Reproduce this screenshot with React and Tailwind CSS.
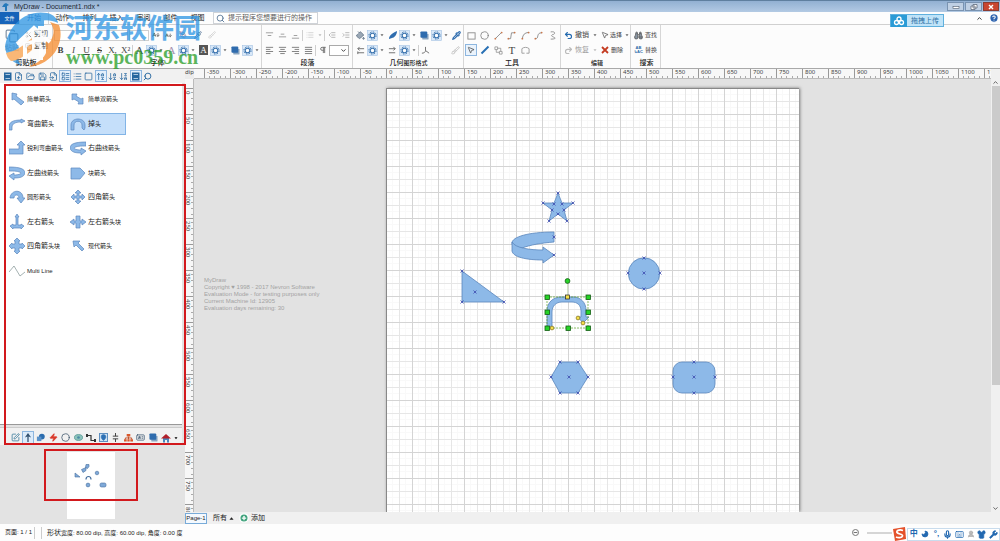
import { useState } from "react"
import {
    AArrowDown, AlignCenter, AlignJustify, AlignLeft, AlignRight, ArrowDownAZ, ArrowDownToLine, ArrowDownZA,
    ArrowUpAZ, ArrowUpToLine, Binoculars, Brush, ChevronDown, ChevronUp, Circle, CircleHelp, CirclePlus,
    Copy, FileInput, FilePlus, FoldVertical, FolderOpen, House, IdCard, IndentDecrease, IndentIncrease, Keyboard,
    List, MapPin, Mic, Minus, Moon, MousePointer2, Network, PaintBucket, PenTool, Pilcrow, Pipette, Redo2, Save,
    Scissors, Search, Shirt, Square, SquarePen, LayoutList, Undo2, UserRound, Wrench, Zap,
} from "lucide-react";

const SHAPE = "#8db9e8";
const EDGE = "#5b87bd";

const tabs = ["动作", "排列", "插入", "审阅", "部件", "视图"];

// [large part, small part] of each label
const library = [
    { icon: "arrow", big: "", small: "简单箭头" },
    { icon: "double", big: "", small: "简单双箭头" },
    { icon: "bend", big: "弯曲箭", small: "头" },
    { icon: "uturn", big: "掉", small: "头" },
    { icon: "sharp", big: "", small: "锐利弯曲箭头" },
    { icon: "right", big: "右曲", small: "线箭头" },
    { icon: "left", big: "左曲", small: "线箭头" },
    { icon: "block", big: "", small: "块箭头" },
    { icon: "round", big: "", small: "圆形箭头" },
    { icon: "quad", big: "四角箭", small: "头" },
    { icon: "tee", big: "左右箭", small: "头" },
    { icon: "cross", big: "左右箭", small: "头块" },
    { icon: "quadblock", big: "四角箭", small: "头块" },
    { icon: "modern", big: "", small: "现代箭头" },
    { icon: "line", big: "", small: "Multi Line" },
];

const paths = {
    arrow: "M3 2 L8 3 L7 5 L15 11 L12 14 L5 8 L3 9 Z",
    double: "M2 3 L7 3 L6 5 L11 8 L13 7 L13 13 L8 13 L9 11 L4 8 L2 9 Z",
    bend: "M0 14 V11 C0 6 4 4 12 4 V3 L16 5 L12 7 V6 C6 6 3 8 3 11 V14 Z",
    uturn: "M1 14 V9 C1 1 15 1 15 9 V12 L14 14 L12 12 V9 C12 4 4 4 4 9 V14 Z",
    sharp: "M0 14 V9 H10 V5 H8 L12 1 L16 5 H14 V14 Z",
    right: "M16 2 C5 2 0 4 0 8 C1 12 5 13 11 13 V15 L16 11 L11 8 V10 C7 10 4 9 4 8 C6 6 11 6 16 6 Z",
    left: "M0 2 C11 2 16 4 16 8 C15 12 11 13 5 13 V15 L0 11 L5 8 V10 C9 10 12 9 12 8 C10 6 5 6 0 6 Z",
    block: "M1 3 H10 L15 8 L10 14 H1 Z",
    round: "M1 9 C2 0 14 0 14 9 H16 L12 14 L8 9 H10 C10 5 5 5 5 9 Z",
    quad: "M8 1 L11 4 H9 V7 H12 V5 L15 8 L12 11 V9 H9 V12 H11 L8 15 L5 12 H7 V9 H4 V11 L1 8 L4 5 V7 H7 V4 H5 Z",
    tee: "M8 0 L10 3 H9 V11 H12 V10 L15 12 L12 15 V14 H4 V15 L1 12 L4 10 V11 H7 V3 H6 Z",
    cross: "M6 2 H10 V7 H12 V5 L16 8 L12 11 V9 H10 V14 H6 V9 H4 V11 L0 8 L4 5 V7 H6 Z",
    quadblock: "M8 0 L11 3 H10 V6 H13 V5 L16 8 L13 11 V10 H10 V13 H11 L8 16 L5 13 H6 V10 H3 V11 L0 8 L3 5 V6 H6 V3 H5 Z",
    modern: "M3 3 L10 3 L8 5 L14 11 L12 13 L6 7 L4 9 Z",
};

function ShapeIcon({ name }) {
    return (
        <svg viewBox="0 0 16 16" className="size-4 shrink-0">
            {name === "line" ? (
                <path d="M0 9 L5 3 L11 13 L16 9" fill="none" stroke="#7e9190" strokeWidth="0.7" />
            ) : (
                <path d={paths[name]} fill={SHAPE} stroke={EDGE} strokeWidth="0.7" />
            )}
        </svg>
    );
}

function Tool({ label, children, className = "w-[13px]" }) {
    return (
        <button type="button" aria-label={label} className={`flex h-[12px] shrink-0 items-center justify-center ${className}`}>
            {children}
        </button>
    );
}

function Gear() {
    return (
        <svg viewBox="0 0 11 11" className="h-[11px] w-[11px] shrink-0">
            <rect x="0.5" y="0.5" width="10" height="10" fill="#d9e8f8" stroke="#a3c2e3" strokeWidth="0.6" />
            <circle cx="5.5" cy="5.5" r="3.6" fill="none" stroke="#3a73ae" strokeWidth="1" strokeDasharray="1.6 1.2" />
            <circle cx="5.5" cy="5.5" r="2.3" fill="#fff" stroke="#3a73ae" strokeWidth="1.1" />
        </svg>
    );
}

function Caret({ className = "text-[#666]" }) {
    return (
        <svg viewBox="0 0 8 8" className={`h-2 w-2 shrink-0 ${className}`}>
            <path d="M2.5 3.3 H5.5 L4 5.2 Z" fill="currentColor" />
        </svg>
    );
}

// icon + settings box + drop-down arrow
function FormatTool({ label, children }) {
    return (
        <div className="flex h-[12px] w-8 shrink-0 items-center">
            <Tool label={label}>{children}</Tool>
            <button type="button" aria-label={`${label} 设置`} className="flex items-center">
                <Gear />
                <Caret />
            </button>
        </div>
    );
}

function Divider() {
    return <span className="h-[11px] w-px shrink-0 bg-[#cfcfcf]" />;
}

function Group({ title, width, children }) {
    return (
        <section className={`flex shrink-0 flex-col border-r border-[#d6d6d6] pt-1 ${width}`}>
            <div className="flex h-[30px] flex-col gap-[3px]">{children}</div>
            <h2 className="text-center text-[7px] leading-[10px] font-medium text-[#222]">{title}</h2>
        </section>
    );
}

function TitleBar() {
    return (
        <header className="flex h-[12px] shrink-0 items-center border-t border-[#5f7f9f] bg-linear-to-b from-[#92b0d2] to-[#b3cae4] pl-[2px]">
            <svg viewBox="0 0 8 8" className="h-[8px] w-[8px]">
                <path d="M4 0 L7 2 L5 3 V8 H3 V4 L0 4 L2 1 Z" fill="#2579ba" />
            </svg>
            <h1 className="ml-1 font-['Liberation_Sans',sans-serif] text-[7px] leading-[9px] text-[#1c2733]">MyDraw - Document1.ndx *</h1>
            <div className="ml-auto flex h-[9px] gap-px pr-px">
                <button type="button" aria-label="最小化" className="flex w-[17px] items-center justify-center border border-[#7993b1] bg-[#bfd0e4] text-[#4d5a6c]">
                    <svg viewBox="0 0 8 6" className="h-[6px] w-[8px]"><rect x="1" y="2.5" width="6" height="2" fill="#fff" stroke="currentColor" strokeWidth="0.6" /></svg>
                </button>
                <button type="button" aria-label="还原" className="flex w-[17px] items-center justify-center border border-[#7993b1] bg-[#bfd0e4] text-[#4d5a6c]">
                    <svg viewBox="0 0 8 6" className="h-[6px] w-[8px]"><path d="M3 0.5 H7 V4 H3 Z M1 2 H5 V5.5 H1 Z" fill="#fff" stroke="currentColor" strokeWidth="0.7" /></svg>
                </button>
                <button type="button" aria-label="关闭" className="flex w-[16px] items-center justify-center border border-[#8a3c33] bg-[#c9452f]">
                    <svg viewBox="0 0 8 6" className="h-[6px] w-[8px]"><path d="M2 1 L6 5 M6 1 L2 5" stroke="#fff" strokeWidth="1.4" /></svg>
                </button>
            </div>
        </header>
    );
}

function TabBar() {
    return (
        <nav className="flex h-[13px] shrink-0 items-stretch border-b border-[#d0d0d0] bg-[#fdfdfd] text-[7px] leading-[12px] text-[#222]">
            <button type="button" className="w-[19px] bg-[#1663b9] text-[5px] text-white">文件</button>
            <button type="button" className="w-[30px] border-x border-[#d6d6d6] text-[#1e64ab]">开始</button>
            {tabs.map((tab) => (
                <button key={tab} type="button" className="w-[27px] text-center">{tab}</button>
            ))}
            <label className="ml-[2px] flex w-[105px] items-center gap-[3px] border border-[#cfd3d8] bg-white pl-[2px] text-[#5c5c5c]">
                <Search className="size-[9px] shrink-0 text-[#3d6187]" strokeWidth={2} />
                <input
                    aria-label="搜索"
                    placeholder="提示程序您想要进行的操作"
                    className="min-w-0 flex-1 text-[7px] leading-[10px] outline-none placeholder:text-[#5c5c5c]"
                />
            </label>
            <div className="ml-auto flex items-center gap-[6px] pr-[1px]">
                <button type="button" aria-label="折叠功能区"><ChevronUp className="size-[7px]" strokeWidth={3} /></button>
                <button type="button" aria-label="帮助"><CircleHelp className="size-[10px] fill-[#2c62ae] text-white" strokeWidth={2.5} /></button>
            </div>
        </nav>
    );
}

function Ribbon() {
    const letters = [
        ["B", "font-bold"], ["I", "italic"], ["U", "underline"], ["S", "line-through"],
    ];
    return (
        <div className="flex h-[44px] shrink-0 overflow-hidden border-b border-[#a9a9a9] bg-[#fcfcfc] text-[7px] leading-[10px] text-[#444]">
            <Group title="剪贴板" width="w-[53px]">
                <div className="flex gap-[6px] pl-[5px] whitespace-nowrap">
                    <button type="button" className="flex flex-col items-center text-[#999]">
                        <Copy className="size-[14px] text-[#7a8da2]" />
                        <span>粘贴</span>
                    </button>
                    <div className="flex flex-col gap-[2px]">
                        <button type="button" className="flex items-center gap-[2px]"><Scissors className="size-[7px]" />剪切</button>
                        <button type="button" className="flex items-center gap-[2px]"><Copy className="size-[7px]" />复制</button>
                    </div>
                </div>
            </Group>
            <Group title="字体" width="w-[209px] pl-[1px]">
                <div className="flex h-[12px] items-center">
                    <select aria-label="字体" className="h-[11px] w-[74px] appearance-none border border-[#cfcfcf] bg-white" />
                    <select aria-label="字号" className="ml-px h-[11px] w-[20px] appearance-none border border-[#cfcfcf] bg-white" />
                    <Tool label="增大字号"><AArrowDown className="size-[8px]" /></Tool>
                    <Tool label="减小字号"><AArrowDown className="size-[7px]" /></Tool>
                    <Tool label="清除格式" className="w-[15px]"><PenTool className="size-[8px] text-[#8d7da2]" /></Tool>
                    <Tool label="取色" className="w-[15px]"><Pipette className="size-[8px] text-[#43658d]" /></Tool>
                    <Tool label="格式刷"><Brush className="size-[8px] text-[#ccc]" /></Tool>
                </div>
                <div className="flex h-[12px] items-center font-['Liberation_Serif',serif] text-[9px]">
                    {letters.map(([letter, style]) => (
                        <Tool key={letter} label={letter}><span className={style}>{letter}</span></Tool>
                    ))}
                    <Tool label="下标"><span>X,</span></Tool>
                    <Tool label="上标"><span>X²</span></Tool>
                    <Divider />
                    <FormatTool label="文字填充"><span className="text-[11px]">A</span></FormatTool>
                    <FormatTool label="文字描边"><span className="text-[11px] text-[#a48fae]">A</span></FormatTool>
                    <FormatTool label="文字背景"><span className="w-[9px] bg-[#555] text-center text-white">A</span></FormatTool>
                    <FormatTool label="阴影"><BlueBox /></FormatTool>
                </div>
            </Group>
            <Group title="段落" width="w-[91px] pl-[1px]">
                <div className="flex h-[12px] items-center text-[#999]">
                    <Tool label="顶端对齐"><Bars d="M1 2 H9 M3 5 H7" /></Tool>
                    <Tool label="居中对齐"><Bars d="M3 3.5 H7 M1 6.5 H9" /></Tool>
                    <Tool label="底端对齐"><Bars d="M3 5 H7 M1 8 H9" /></Tool>
                    <Divider />
                    <Tool label="项目符号"><List className="size-[8px] text-[#c4c4c4]" /></Tool>
                    <Caret className="text-[#bbb]" />
                    <Divider />
                    <Tool label="减少缩进" className="w-[14px]"><IndentDecrease className="size-[8px]" /></Tool>
                    <Tool label="增加缩进"><IndentIncrease className="size-[8px]" /></Tool>
                </div>
                <div className="flex h-[12px] items-center text-[#777]">
                    <Tool label="左对齐"><Bars d="M1 1.5 H9 M1 3.8 H6 M1 6.1 H9 M1 8.4 H6" /></Tool>
                    <Tool label="居中"><Bars d="M1 1.5 H9 M2.5 3.8 H7.5 M1 6.1 H9 M2.5 8.4 H7.5" /></Tool>
                    <Tool label="右对齐"><Bars d="M1 1.5 H9 M4 3.8 H9 M1 6.1 H9 M4 8.4 H9" /></Tool>
                    <Tool label="两端对齐"><Bars d="M1 1.5 H9 M1 3.8 H9 M1 6.1 H9 M1 8.4 H9" /></Tool>
                    <Divider />
                    <Tool label="段落方向"><Pilcrow className="size-[8px]" strokeWidth={3} /></Tool>
                    <div className="flex h-[11px] w-[20px] items-center border border-[#aaa] bg-white">
                        <select aria-label="段落" className="w-[10px] appearance-none" />
                        <ChevronDown className="size-[7px] text-[#333]" strokeWidth={3} />
                    </div>
                </div>
            </Group>
            <Group title={<>几何<span className="text-[6px]">图形格式</span></>} width="w-[111px] pl-[1px]">
                <div className="flex h-[12px] items-center">
                    <FormatTool label="填充"><PaintBucket className="size-[9px] fill-[#9aa7b5] text-[#5a6c80]" /></FormatTool>
                    <FormatTool label="描边">
                        <svg viewBox="0 0 10 10" className="size-[10px]"><path d="M1 9 C1 6 3 4 9 1 C9 5 6 8 4 8 Z" fill="#2e6cae" /></svg>
                    </FormatTool>
                    <FormatTool label="阴影"><BlueBox /></FormatTool>
                    <Tool label="取色器"><Pipette className="size-[9px] text-[#2e6cae]" strokeWidth={3} /></Tool>
                </div>
                <div className="flex h-[12px] items-center">
                    <FormatTool label="起始箭头"><Ends /></FormatTool>
                    <FormatTool label="结束箭头"><Ends flip /></FormatTool>
                    <Divider />
                    <Tool label="转角">
                        <svg viewBox="0 0 10 10" className="size-[9px]"><path d="M5 1 V5 C5 7 3 8 1 8 M5 5 L9 8" fill="none" stroke="#666" /></svg>
                    </Tool>
                    <Tool label="格式刷" className="ml-auto w-[16px]"><Brush className="size-[9px] text-[#bbb]" /></Tool>
                </div>
            </Group>
            <Group title="工具" width="w-[97px] px-[1px]">
                <div className="grid h-[12px] grid-cols-7 items-center">
                    <Tool label="矩形"><svg viewBox="0 0 10 10" className="size-[9px]"><rect x="1" y="2" width="8" height="7" fill="none" stroke="#8b8b8b" /></svg></Tool>
                    <Tool label="椭圆"><Circle className="size-[9px] text-[#777]" /></Tool>
                    <Curve label="直线" d="M1.5 8.5 L8.5 1.5" />
                    <Curve label="折线" d="M1.5 8.5 H4 L5 2 H8.5" />
                    <Curve label="弧线" d="M1.5 8.5 C2 4 4 2 8.5 1.5" />
                    <Curve label="曲线" d="M1.5 8.5 C6 9 2 2 8.5 2" />
                    <Tool label="自由绘制"><svg viewBox="0 0 10 10" className="size-[9px]"><path d="M3 1 C9 0 8 4 5 4 C2 6 6 6 8 8 C7 9 5 9 3 9" fill="none" stroke="#8b8b8b" /></svg></Tool>
                </div>
                <div className="grid h-[12px] grid-cols-7 items-center">
                    <button type="button" aria-label="指针" className="flex h-[12px] w-[12px] items-center justify-center border border-[#8db6df] bg-[#eaf3fc]"><MousePointer2 className="size-[8px] text-[#333]" /></button>
                    <Tool label="铅笔"><svg viewBox="0 0 10 10" className="size-[10px]"><path d="M1.5 8.5 L8.5 1.5" stroke="#2870b4" strokeWidth="2" /></svg></Tool>
                    <Tool label="连接线"><svg viewBox="0 0 10 10" className="size-[9px]"><path d="M1 1 H4 V4 H1 Z M6 6 H9 V9 H6 Z M4 2.5 H7.5 V6 M2.5 4 V7 H6" fill="none" stroke="#888" strokeWidth="0.8" /></svg></Tool>
                    <Tool label="文本"><span className="font-['Liberation_Serif',serif] text-[11px]">T</span></Tool>
                    <Tool label="闭合"><svg viewBox="0 0 10 10" className="size-[9px]"><path d="M4 8 H1 V3 C3 1 7 1 9 3 V8 H6" fill="none" stroke="#999" /></svg></Tool>
                </div>
            </Group>
            <Group title={<span className="text-[6px]">编辑</span>} width="w-[70px] pl-[3px]">
                <div className="flex h-[12px] items-center whitespace-nowrap">
                    <button type="button" className="flex w-[37px] shrink-0 items-center gap-[2px] text-[7px]"><Undo2 className="size-[9px] shrink-0 text-[#256bb0]" strokeWidth={3} />撤销<Caret /></button>
                    <button type="button" className="flex shrink-0 items-center gap-px text-[6px]"><MousePointer2 className="size-[8px] shrink-0" />选择<Caret /></button>
                </div>
                <div className="flex h-[12px] items-center whitespace-nowrap">
                    <button type="button" className="flex w-[37px] shrink-0 items-center gap-[2px] text-[#999]"><Redo2 className="size-[9px] shrink-0 text-[#bbb]" strokeWidth={3} />恢复<Caret className="text-[#bbb]" /></button>
                    <button type="button" className="flex shrink-0 items-center gap-[2px] text-[6px]">
                        <svg viewBox="0 0 8 8" className="size-[8px]"><path d="M1 1 L7 7 M7 1 L1 7" stroke="#c43c22" strokeWidth="1.8" /></svg>
                        删除
                    </button>
                </div>
            </Group>
            <Group title="搜索" width="w-[30px] pl-[3px] pr-px">
                <button type="button" className="flex h-[12px] items-center gap-[2px] text-[6px] whitespace-nowrap"><Binoculars className="size-[9px] fill-[#8895a3] text-[#555]" />查找</button>
                <button type="button" className="flex h-[12px] items-center gap-[2px] text-[6px] whitespace-nowrap">
                    <span className="w-[9px] text-[4px] leading-[4px] font-bold text-[#2a68a8]">AB<br />↳AC</span>替换
                </button>
            </Group>
        </div>
    );
}

function Bars({ d }) {
    return (
        <svg viewBox="0 0 10 10" className="size-[9px]">
            <path d={d} fill="none" stroke="currentColor" />
        </svg>
    );
}

function BlueBox() {
    return (
        <svg viewBox="0 0 10 10" className="size-[9px]">
            <rect x="2.5" y="3" width="7" height="6.5" rx="1" fill="#8aa5c0" />
            <rect x="0.5" y="0.5" width="7.5" height="7" rx="1" fill="#2f6cae" />
        </svg>
    );
}

function Ends({ flip }) {
    return (
        <svg viewBox="0 0 10 10" className="size-[9px]">
            <path d={flip ? "M1 3 H8 M6 1 L8 3 L6 5 M1 7.5 H8" : "M2 3 H9 M4 1 L2 3 L4 5 M2 7.5 H9 M2 6 V9"} fill="none" stroke="#666" />
        </svg>
    );
}

function Curve({ label, d }) {
    return (
        <Tool label={label}>
            <svg viewBox="0 0 10 10" className="size-[9px]">
                <path d={d} fill="none" stroke="#8a8a8a" />
                <circle cx="1.5" cy="8.5" r="1" fill="#c8774c" />
                <circle cx="8.5" cy="1.8" r="1" fill="#c8774c" />
            </svg>
        </Tool>
    );
}

function Book({ className }) {
    return (
        <svg viewBox="0 0 9 9" className={className}>
            <rect x="1" y="0.5" width="7.5" height="8" fill="currentColor" />
            <path d="M2.5 2.5 H7 M2.5 6.5 H7" stroke="#cfe0f0" strokeWidth="0.8" />
        </svg>
    );
}

function LibraryPanel() {
    const [selected, setSelected] = useState("uturn");
    const blue = "size-[9px] text-[#27679f]";
    const boxed = "flex h-[12px] w-[12px] items-center justify-center border border-[#8db6df] bg-[#e3effb]";
    const plain = "flex h-[12px] w-[12px] items-center justify-center";
    const actions = [
        ["库", Book, plain], ["新建", FilePlus, plain], ["打开", FolderOpen, plain], ["保存", Save, plain],
        ["导入", FileInput, plain], ["图标视图", LayoutList, boxed], ["列表视图", List, plain], ["大图标", Square, plain],
        ["不排序", ArrowUpAZ, boxed], ["升序", ArrowDownAZ, plain], ["降序", ArrowDownZA, plain],
        ["详情", Book, boxed],
    ];
    return (
        <aside className="flex w-[185px] shrink-0 flex-col bg-[#e3e3e3]">
            <div className="flex h-[14px] shrink-0 items-center bg-[#f1f1f1]">
                <div className="grid w-[153px] grid-cols-13 pl-px">
                    {actions.map(([label, Icon, style]) => (
                        <button key={label} type="button" aria-label={label} className={style}><Icon className={blue} strokeWidth={2} /></button>
                    ))}
                    <button type="button" aria-label="查找" className={plain}><Search className="size-[9px] -scale-x-100 text-[#27679f]" strokeWidth={2.5} /></button>
                </div>
            </div>
            <div className="mr-[3px] flex-1 border-b border-[#999] bg-white pt-1 pl-[6px]">
                <ul className="grid h-[196px] w-[122px] grid-cols-2 grid-rows-8">
                    {library.map((item) => (
                        <li key={item.icon} className="flex items-center">
                            <button
                                type="button"
                                onClick={() => setSelected(item.icon)}
                                className={`flex h-[22px] w-[59px] items-center gap-[2px] border pl-[2px] whitespace-nowrap text-[#222] ${selected === item.icon ? "border-[#82b4e6] bg-[#c5dffa]" : "border-transparent"}`}
                            >
                                <ShapeIcon name={item.icon} />
                                <span className="text-[6px] leading-[10px]">
                                    {item.big && <span className="text-[7px]">{item.big}</span>}
                                    {item.small}
                                </span>
                            </button>
                        </li>
                    ))}
                </ul>
            </div>
            <CategoryBar />
            <Thumbnail />
        </aside>
    );
}

function CategoryBar() {
    return (
        <div className="mt-[2px] mr-[3px] shrink-0 border-t border-[#ccc] bg-[#f1f1f1] pt-[3px] pb-px">
            <div className="ml-[9px] grid h-[13px] w-[175px] grid-cols-14 items-center">
                <Tool label="编辑"><SquarePen className="size-[9px] text-[#2f7396]" /></Tool>
                <button type="button" aria-label="箭头" className="flex h-[13px] items-center justify-center border border-[#8db6df] bg-[#dcebfa]">
                    <svg viewBox="0 0 8 10" className="h-[9px] w-[8px]"><path d="M4 0 L7.5 5 L4.700 4 V10 H3.300 V4 L0.500 5 Z" fill="#31506f" /></svg>
                </button>
                <Tool label="基本形状">
                    <svg viewBox="0 0 10 10" className="size-[9px]"><circle cx="6.5" cy="4" r="3.2" fill="#2b6cae" /><rect x="1" y="4" width="5" height="5" fill="#5a92c9" /></svg>
                </Tool>
                <Tool label="电气"><Zap className="size-[9px] fill-[#d93a2b] text-[#d93a2b]" /></Tool>
                <Tool label="圆"><Circle className="size-[9px] text-[#3b5368]" /></Tool>
                <Tool label="云">
                    <svg viewBox="0 0 10 10" className="size-[9px]"><ellipse cx="5" cy="5" rx="4.5" ry="3.2" fill="#8cc3bb" stroke="#5a9b98" /><circle cx="5" cy="5" r="1.5" fill="#4b8aa5" /></svg>
                </Tool>
                <Tool label="连接">
                    <svg viewBox="0 0 10 10" className="size-[10px]"><path d="M1 2.5 H5 V7.5 H9" fill="none" stroke="#333" strokeWidth="1.2" /><path d="M0 1 H2 V4 H0 Z M8 6 H10 V9 H8 Z" fill="#333" /></svg>
                </Tool>
                <Tool label="地图">
                    <span className="border border-[#5e8fc0] bg-[#cfe2f3]"><MapPin className="size-[7px] fill-[#2e71b5] text-[#2e71b5]" /></span>
                </Tool>
                <Tool label="间距">
                    <svg viewBox="0 0 10 10" className="size-[9px]"><path d="M5 0 V3.500 M5 6.500 V10 M2 3.500 H8 M2 6.500 H8" stroke="#333" /></svg>
                </Tool>
                <Tool label="组织结构">
                    <svg viewBox="0 0 10 10" className="size-[9px]"><path d="M3 1 H7 V4 H3 Z M0 7 H3 V9.500 H0 Z M3.700 7 H6.300 V9.500 H3.700 Z M7 7 H10 V9.500 H7 Z" fill="#d9582b" /><path d="M5 4 V7 M1.500 7 V5.500 H8.500 V7" fill="none" stroke="#c04b22" /></svg>
                </Tool>
                <Tool label="名片"><IdCard className="size-[9px] text-[#37536c]" /></Tool>
                <Tool label="标注"><BlueBox /></Tool>
                <Tool label="建筑">
                    <svg viewBox="0 0 10 10" className="size-[10px]"><path d="M2 5 H8 V9.500 H6 V7 H4 V9.500 H2 Z" fill="#4b86bb" /><path d="M0 5.500 L5 1 L10 5.500 Z" fill="#b1202b" /></svg>
                </Tool>
                <Tool label="更多" className="w-[8px]"><Caret className="text-black" /></Tool>
            </div>
        </div>
    );
}

function Thumbnail() {
    return (
        <div className="flex h-[79px] shrink-0 justify-center bg-[#e3e3e3] pt-[7px]">
            <svg viewBox="0 0 48 67" className="mr-[3px] h-[67px] w-[48px] bg-white">
                <g fill="#7fa9d8" stroke="#466f9f" strokeWidth="0.6">
                    <path d="M19 12.500 h3 v2 l-1.500 2 -2 -1 z" />
                    <path d="M14.500 17.500 l4.500 -2 v3 l-3 2 z" />
                    <path d="M8 21 L13 25 H8 Z" />
                    <circle cx="30" cy="21" r="1.8" />
                    <path d="M19 27.500 C19 23.500 24 23.500 24 27.500" fill="none" strokeWidth="1.2" />
                    <circle cx="21" cy="33" r="1.9" />
                    <rect x="33" y="31" width="6" height="4" rx="1.5" />
                </g>
            </svg>
        </div>
    );
}

const hLabels = Array.from({ length: 31 }, (_, i) => -350 + i * 50);
const vLabels = Array.from({ length: 17 }, (_, i) => i * 50);

function RulerTop() {
    return (
        <div className="flex h-[10px] shrink-0 bg-[#f7f7f7] font-['Noto_Sans',sans-serif] text-[6px] leading-[7px] text-[#444]">
            <span className="w-[9px] shrink-0 bg-[#ececec]">dip</span>
            <div className="flex min-w-0 flex-1 overflow-hidden border-b border-[#bbb] pl-[10px]">
                {hLabels.map((n) => (
                    <div key={n} className="flex w-[26px] shrink-0 flex-col justify-between border-l border-[#999] pl-[2px]">
                        {n}
                        <i className="flex h-[2px] justify-around pr-[2px]">
                            <b className="w-px bg-[#aaa]" /><b className="w-px bg-[#aaa]" /><b className="w-px bg-[#aaa]" /><b className="w-px bg-[#aaa]" />
                        </i>
                    </div>
                ))}
            </div>
            <span className="w-[9px] shrink-0 bg-[#f0f0f0]" />
        </div>
    );
}

function RulerSide() {
    return (
        <div className="w-[9px] shrink-0 overflow-hidden border-r border-[#bbb] bg-[#f7f7f7] pt-[9px] font-['Noto_Sans',sans-serif] text-[6px] leading-[6px] text-[#444]">
            {vLabels.map((n) => (
                <div key={n} className="flex h-[26px] justify-between border-t border-[#999]">
                    <span className="pt-[2px] [writing-mode:vertical-rl]">{n}</span>
                    <i className="flex w-[2px] flex-col justify-around">
                        <b className="h-px bg-[#aaa]" /><b className="h-px bg-[#aaa]" /><b className="h-px bg-[#aaa]" /><b className="h-px bg-[#aaa]" />
                    </i>
                </div>
            ))}
        </div>
    );
}

const anchors = [
    [558, 193], [543, 203], [573, 203], [554, 204], [562, 204], [552, 210], [564, 210], [558, 214], [549, 221], [567, 221],
    [554, 237], [554, 255], [462, 271], [462, 302], [504, 302], [475, 292],
    [644, 258], [628, 273], [660, 273], [644, 289], [644, 273],
    [560, 362], [578, 362], [551, 377], [588, 377], [560, 393], [578, 393], [569, 377],
    [694, 362], [673, 377], [715, 377], [694, 393], [694, 377],
];
const handles = [[547, 297], [588, 297], [547, 312], [588, 312], [547, 328], [568, 328], [588, 328]];

function Page() {
    return (
        <div className="mt-[9px] w-[413px] shrink-0 border-t border-l border-[#888] bg-white shadow-[1px_0_3px_#777]">
            <svg className="block h-full w-full">
                <defs>
                    <pattern id="grid" width="26" height="26" patternUnits="userSpaceOnUse">
                        <path d="M5.5 0 V26 M18.5 0 V26 M0 5.5 H26 M0 18.5 H26" stroke="#f9f9f9" />
                        <path d="M12.5 0 V26 M0 12.5 H26" stroke="#e6e6e6" />
                        <path d="M25.5 0 V26 M0 25.5 H26" stroke="#d4d4d4" />
                    </pattern>
                </defs>
                <rect width="100%" height="100%" fill="url(#grid)" />
                <g transform="translate(-387 -89)">
                    <g fill={SHAPE} stroke={EDGE} strokeWidth="0.8">
                        <path d="M558 193 L562 203 H573 L564 210 L567 221 L558 214 L549 221 L552 210 L543 203 H554 Z" />
                        <path d="M554 232 C528 232 512 237 512 243 C512 247 516 250 522 248 C530 245 541 243 554 242 Z" />
                        <path d="M512 242 V251 C513 257 526 260 543 260 V263 L554 255 L543 247 V250 C530 250 515 248 512 242 Z" />
                        <path d="M462 271 L504 302 H462 Z" />
                        <circle cx="644" cy="273.500" r="15.700" />
                        <path d="M547 328 V312 C547 302 553 297 562 297 H573 C581 297 586 303 586 310 V317 H589 L583 323 L578 317 H581 V311 C581 305 577 302 572 302 H562 C556 302 552 306 552 312 V328 Z" />
                        <path d="M560 362 H578 L588 377 L578 393 H560 L551 377 Z" />
                        <rect x="673" y="362" width="42" height="31" rx="9" />
                    </g>
                    <rect x="547" y="297" width="41" height="31" fill="none" stroke="#5ea62b" strokeWidth="0.7" strokeDasharray="2 1" />
                    <path d="M567.500 283 V297" stroke="#b5cf9d" strokeWidth="0.6" />
                    <g stroke="#3b49ad" strokeWidth="0.8">
                        {anchors.map(([x, y]) => (
                            <path key={`${x}-${y}`} d={`M${x - 1.5} ${y - 1.5} l3 3 m0 -3 l-3 3`} />
                        ))}
                    </g>
                    <g fill="#27d327" stroke="#145c14" strokeWidth="0.8">
                        {handles.map(([x, y]) => (
                            <rect key={`${x}-${y}`} x={x - 2} y={y - 2} width="4.500" height="4.500" />
                        ))}
                        <circle cx="567.500" cy="281" r="2.400" />
                    </g>
                    <g fill="#f6e04a" stroke="#7a6a1c" strokeWidth="0.7">
                        <rect x="565.500" y="295" width="4" height="4" stroke="#222" />
                        <circle cx="578" cy="318" r="1.900" />
                        <circle cx="583" cy="323" r="1.900" />
                        <circle cx="552" cy="328" r="1.900" />
                    </g>
                </g>
            </svg>
        </div>
    );
}

function Workspace() {
    return (
        <main className="flex min-w-0 flex-1 flex-col">
            <RulerTop />
            <div className="flex min-h-0 flex-1">
                <RulerSide />
                <div className="flex min-w-0 flex-1 overflow-hidden bg-[#e2e2e2]">
                    <div className="w-[192px] shrink-0 pt-[198px] pl-[10px] font-['Liberation_Sans',sans-serif] text-[6px] leading-[7px] whitespace-nowrap text-[#a3a3a3]">
                        <p>MyDraw</p>
                        <p>Copyright ♥ 1998 - 2017 Nevron Software</p>
                        <p>Evaluation Mode - for testing purposes only</p>
                        <p>Current Machine Id: 12905</p>
                        <p>Evaluation days remaining: 30</p>
                    </div>
                    <Page />
                </div>
                <div className="flex w-[9px] shrink-0 flex-col items-center justify-between bg-[#f0f0f0] text-[#555]">
                    <button type="button" aria-label="向上滚动"><ChevronUp className="size-[7px]" strokeWidth={3} /></button>
                    <div className="mb-auto h-[69%] w-[8px] bg-[#cbcbcb]" />
                    <button type="button" aria-label="向下滚动"><ChevronDown className="size-[7px]" strokeWidth={3} /></button>
                </div>
            </div>
            <div className="flex h-[12px] shrink-0 items-center bg-[#f0f0f0] text-[7px] leading-[10px] text-[#222]">
                <button type="button" className="h-[11px] w-[22px] border border-[#78abd9] bg-[#f4f9fe] font-['Liberation_Sans',sans-serif] text-[6px] leading-[9px]">Page-1</button>
                <button type="button" className="ml-[6px] flex items-center">
                    所有
                    <svg viewBox="0 0 6 6" className="ml-[2px] size-[5px]"><path d="M0.5 4.500 H5.500 L3 1.500 Z" fill="#222" /></svg>
                </button>
                <button type="button" className="ml-[5px] flex items-center gap-[2px]"><CirclePlus className="size-[10px] fill-[#3fa27c] text-white" strokeWidth={3} />添加</button>
            </div>
        </main>
    );
}

function StatusBar() {
    return (
        <footer className="flex h-[17px] shrink-0 items-center bg-[#fdfdfd] pl-[5px] text-[6px] leading-[9px] text-[#222]">
            <span className="w-[29px]">页面: 1 / 1</span>
            <span className="h-[12px] w-2 border-x border-[#ccc]" />
            <span className="ml-[5px]"><span className="text-[7px]">形状</span>宽度: 80.00 dip, 高度: 60.00 dip, 角度: 0.00 度</span>
            <div className="ml-auto flex items-center gap-2">
                <button type="button" aria-label="缩小" className="flex h-[7px] w-[7px] items-center justify-center rounded-full border border-[#777]"><Minus className="size-[5px]" strokeWidth={3} /></button>
                <input type="range" aria-label="缩放" className="h-[2px] w-[25px] appearance-none bg-[#d5d5d5] [&::-webkit-slider-thumb]:appearance-none" />
            </div>
            <ImeBar />
        </footer>
    );
}

function ImeBar() {
    const ime = "size-[9px] text-[#2268b0]";
    return (
        <div className="flex h-[14px] w-[108px] items-center self-end">
            <svg viewBox="0 0 15 14" className="h-[14px] w-[15px]">
                <path d="M1 2 L13 0 L14 12 L3 14 Z" fill="#e4512b" />
                <path d="M11 3.500 C7 2 4 4 5 5.500 C6 7.500 11 6.500 10.500 9 C10 11 6 11 4 10" fill="none" stroke="#fff" strokeWidth="1.700" />
            </svg>
            <div className="grid h-[13px] flex-1 grid-cols-8 items-center justify-items-center border border-[#c9dced] bg-white">
                <button type="button" className="text-[8px] leading-[10px] font-bold text-[#2268b0]">中</button>
                <Moon className="size-[8px] -scale-x-100 fill-[#2268b0] text-[#2268b0]" />
                <span className="text-[8px] leading-[10px] font-bold text-[#2268b0]">°,</span>
                <Mic className={ime} strokeWidth={3} />
                <Keyboard className={ime} />
                <UserRound className="size-[8px] fill-[#bbb] text-[#aaa]" />
                <Shirt className="size-[9px] fill-[#2268b0] text-[#2268b0]" />
                <Wrench className="size-[9px] fill-[#2268b0] text-[#2268b0]" />
            </div>
        </div>
    );
}

function Watermark() {
    return (
        <div className="pointer-events-none absolute top-[11px] left-[4px] flex opacity-75">
            <svg viewBox="0 0 58 56" className="h-[56px] w-[58px]">
                <path d="M1 36 C4 14 22 -2 43 2 C49 3 54 8 54 12 C42 6 26 10 18 22 C15 27 12 32 13 38 Z" fill="#2b94e3" />
                <path d="M1 36 C2 46 9 52 17 54 C12 48 12 41 15 36 L12 32 L28 18 L34 24 V15 L40 15 V8 L30 5 L12 18 Z" fill="#2b94e3" />
                <path d="M55 14 C61 30 50 54 24 56 C34 52 40 47 42 42 L42 26 L47 29 C50 23 51 18 46 11 Z" fill="#f58a2b" />
                <path d="M2 42 C12 40 19 35 28 27 L28 39 C21 45 13 50 7 50 C4 48 3 45 2 42 Z" fill="#f9a14a" />
                <path d="M13 33 L30 17 L46 31 M21 31 V47 M21 36 C25 29 37 29 37 38 V49" fill="none" stroke="#fff" strokeWidth="4" />
            </svg>
            <div className="ml-1 flex flex-col font-bold whitespace-nowrap">
                <span className="text-[27px] leading-[36px] text-[#2b94e3]">河东软件园</span>
                <span className="font-['Liberation_Serif',serif] text-[20px] leading-[20px] text-[#269c26]">www.pc0359.cn</span>
            </div>
        </div>
    );
}

export default function App() {
    return (
        <div className="relative flex h-screen flex-col overflow-hidden bg-[#f0f0f0] font-['Liberation_Sans','Noto_Sans_CJK_SC',sans-serif]">
            <TitleBar />
            <TabBar />
            <Ribbon />
            <div className="flex min-h-0 flex-1">
                <LibraryPanel />
                <Workspace />
            </div>
            <StatusBar />
            <Watermark />
            <button type="button" className="absolute top-[14px] right-[56px] flex h-[13px] w-[54px] items-center border border-[#5fb0dd] bg-[#bfe3f8] text-[7px] leading-[10px] text-[#2d6fa3]">
                <svg viewBox="0 0 16 12" className="h-[12px] w-[16px] shrink-0 bg-[#2a9bd6]">
                    <g fill="none" stroke="#fff" strokeWidth="1.300"><circle cx="8" cy="4" r="2" /><circle cx="5.500" cy="7.500" r="2" /><circle cx="10.500" cy="7.500" r="2" /></g>
                </svg>
                <span className="flex-1 text-center">拖拽上传</span>
            </button>
            {/* callout frames */}
            <div className="pointer-events-none absolute top-[84px] bottom-[96px] left-[4px] w-[182px] border-2 border-[#d2191d]" />
            <div className="pointer-events-none absolute bottom-[40px] left-[44px] h-[52px] w-[94px] border-2 border-[#d2191d]" />
        </div>
    );
}
